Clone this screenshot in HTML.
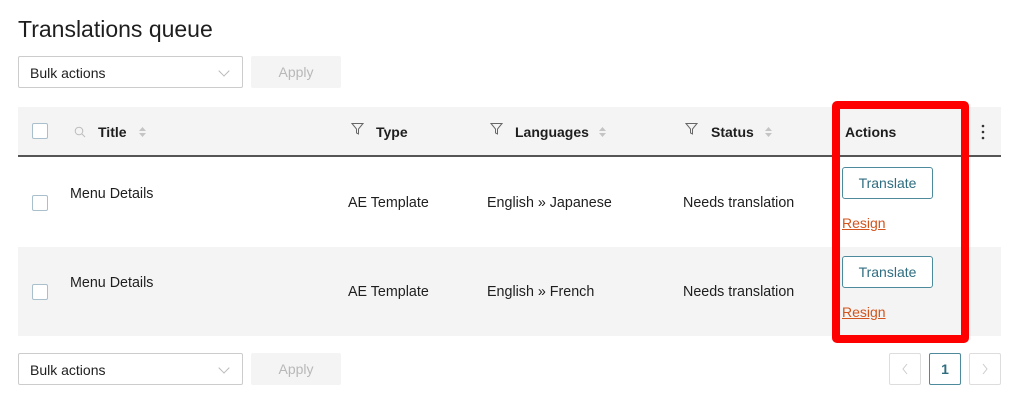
<!DOCTYPE html>
<html><head><meta charset="utf-8"><style>
*{box-sizing:border-box;margin:0;padding:0}
body{width:1014px;height:413px;background:#fff;font-family:"Liberation Sans",Arial,sans-serif;color:#1e1e1e;position:relative;overflow:hidden}
.a{position:absolute}
h1{position:absolute;left:18px;top:16px;font-size:23px;font-weight:400;color:#1e1e1e}
.sel{border:1px solid #ccc;border-radius:2px;width:225px;height:32px;font-size:14px;padding:8px 11px;background:#fff}
.sel:after{content:"";position:absolute;right:14px;top:10px;width:7px;height:7px;border-right:1px solid #bbb;border-bottom:1px solid #bbb;transform:rotate(45deg)}
.apply{width:90px;height:32px;background:#f4f4f4;color:#b8b8b8;font-size:14px;text-align:center;line-height:32px;border-radius:2px}
.cb{width:16px;height:16px;border:1px solid #a9c0cc;border-radius:2px;background:#fff}
.th{font-size:14px;font-weight:700;color:#1e1e1e}
.td{font-size:14.3px;color:#1e1e1e}
.btn{width:91px;height:32px;border:1px solid #4d8a9b;border-radius:3px;color:#2f6d80;font-size:14px;text-align:center;line-height:30px;background:#fff}
.rs{font-size:14px;color:#d2541c;text-decoration:underline}
.pg{width:32px;height:32px;border:1px solid #ddd;border-radius:2px;text-align:center;line-height:30px;color:#ccc;font-size:14px}
</style></head><body>
<h1>Translations queue</h1>
<div class="a sel" style="left:18px;top:56px">Bulk actions</div>
<div class="a apply" style="left:251px;top:56px">Apply</div>

<div class="a" style="left:18px;top:107px;width:983px;height:49px;background:#f4f4f4"></div>
<div class="a" style="left:18px;top:155px;width:983px;height:2px;background:#555"></div>
<div class="a" style="left:18px;top:247px;width:983px;height:89px;background:#f4f4f4"></div>

<div class="a cb" style="left:32px;top:123px"></div>
<svg class="a" style="left:74px;top:126px" width="12" height="12" viewBox="0 0 12 12"><circle cx="5" cy="5" r="3.8" fill="none" stroke="#bbb" stroke-width="1"/><path d="M8 8L11 11" stroke="#bbb"/></svg>
<div class="a th" style="left:98px;top:124px">Title</div>
<svg class="a" style="left:138px;top:125px" width="9" height="14" viewBox="0 0 9 14"><path d="M1 6L4.5 2L8 6ZM1 8L4.5 12L8 8Z" fill="#c4c4c4"/></svg>
<svg class="a" style="left:351px;top:122px" width="13" height="13" viewBox="0 0 13 13"><path d="M1 1.5H12L7.5 7V12L5.5 11V7Z" fill="none" stroke="#666" stroke-width="1"/></svg>
<div class="a th" style="left:376px;top:124px">Type</div>
<svg class="a" style="left:490px;top:122px" width="13" height="13" viewBox="0 0 13 13"><path d="M1 1.5H12L7.5 7V12L5.5 11V7Z" fill="none" stroke="#666" stroke-width="1"/></svg>
<div class="a th" style="left:515px;top:124px">Languages</div>
<svg class="a" style="left:598px;top:125px" width="9" height="14" viewBox="0 0 9 14"><path d="M1 6L4.5 2L8 6ZM1 8L4.5 12L8 8Z" fill="#c4c4c4"/></svg>
<svg class="a" style="left:685px;top:122px" width="13" height="13" viewBox="0 0 13 13"><path d="M1 1.5H12L7.5 7V12L5.5 11V7Z" fill="none" stroke="#666" stroke-width="1"/></svg>
<div class="a th" style="left:711px;top:124px">Status</div>
<svg class="a" style="left:764px;top:125px" width="9" height="14" viewBox="0 0 9 14"><path d="M1 6L4.5 2L8 6ZM1 8L4.5 12L8 8Z" fill="#c4c4c4"/></svg>
<div class="a th" style="left:845px;top:124px">Actions</div>
<svg class="a" style="left:981px;top:124px" width="4" height="16" viewBox="0 0 4 16"><circle cx="2" cy="2" r="1.3" fill="#333"/><circle cx="2" cy="8" r="1.3" fill="#333"/><circle cx="2" cy="14" r="1.3" fill="#333"/></svg>

<div class="a cb" style="left:32px;top:195px"></div>
<div class="a td" style="left:70px;top:186px">Menu Details</div>
<div class="a td" style="left:348px;top:195px">AE Template</div>
<div class="a td" style="left:487px;top:195px">English » Japanese</div>
<div class="a td" style="left:683px;top:195px">Needs translation</div>
<div class="a btn" style="left:842px;top:167px">Translate</div>
<div class="a rs" style="left:842px;top:215px">Resign</div>

<div class="a cb" style="left:32px;top:284px"></div>
<div class="a td" style="left:70px;top:275px">Menu Details</div>
<div class="a td" style="left:348px;top:284px">AE Template</div>
<div class="a td" style="left:487px;top:284px">English » French</div>
<div class="a td" style="left:683px;top:284px">Needs translation</div>
<div class="a btn" style="left:842px;top:256px">Translate</div>
<div class="a rs" style="left:842px;top:304px">Resign</div>

<div class="a" style="left:832px;top:101px;width:137px;height:242px;border:8px solid #f00;border-radius:5px"></div>

<div class="a sel" style="left:18px;top:353px">Bulk actions</div>
<div class="a apply" style="left:251px;top:353px">Apply</div>
<div class="a pg" style="left:889px;top:353px"><svg width="8" height="12" viewBox="0 0 8 12" style="margin-top:9px"><path d="M6 1L2 6L6 11" fill="none" stroke="#ccc"/></svg></div>
<div class="a pg" style="left:929px;top:353px;border-color:#4d8a9b;color:#2f6d80;font-weight:700">1</div>
<div class="a pg" style="left:969px;top:353px"><svg width="8" height="12" viewBox="0 0 8 12" style="margin-top:9px"><path d="M2 1L6 6L2 11" fill="none" stroke="#ccc"/></svg></div>
</body></html>
